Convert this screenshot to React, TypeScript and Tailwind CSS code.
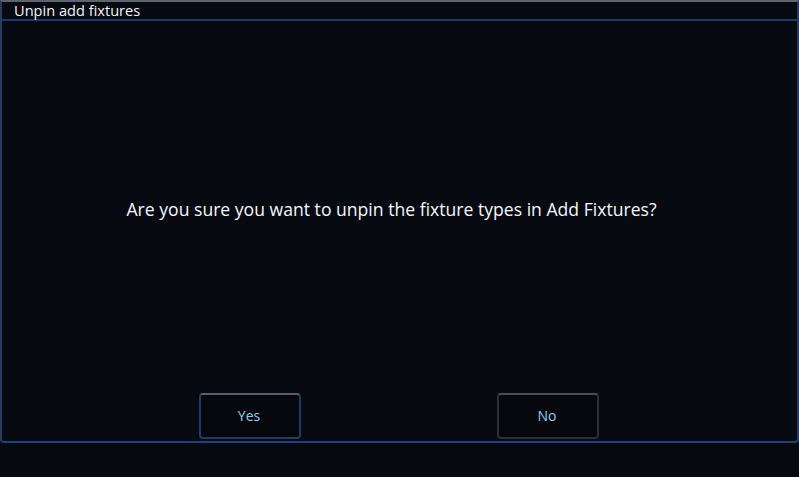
export default function App() {
  return (
    <div className="h-[477px] w-[799px] bg-[#070910] font-['Open_Sans',sans-serif]">
      <div className="flex h-[443px] flex-col rounded-b-[4px] border-x-2 border-b-2 border-t-2 border-x-[#2a3d60] border-b-[#1d3f7a] border-t-[#5c6470] bg-[#080a12]">
        <div className="flex h-[19px] items-center border-b-2 border-[#1d3a6e] pl-[12px] text-[14.6px] leading-none text-[#f2f4f8]">
          Unpin add fixtures
        </div>
        <div className="flex flex-1 items-center justify-center pr-[16px] pt-[4px] text-[17.6px] text-[#f4f6fa]">
          Are you sure you want to unpin the fixture types in Add Fixtures?
        </div>
        <div className="flex gap-[196px] pb-[2px] pl-[197px]">
          <button className="flex h-[46px] w-[102px] items-center justify-center rounded-[4px] border-2 border-[#1f3a66] border-t-[#55606e] bg-[#05070c] pb-[2px] pr-[2px] text-[14px] text-[#8fd0f2]">
            Yes
          </button>
          <button className="flex h-[46px] w-[102px] items-center justify-center rounded-[4px] border-2 border-[#2a2e36] border-t-[#4a4f58] bg-[#05070c] pb-[2px] pr-[2px] text-[14px] text-[#8fd0f2]">
            No
          </button>
        </div>
      </div>
    </div>
  );
}
